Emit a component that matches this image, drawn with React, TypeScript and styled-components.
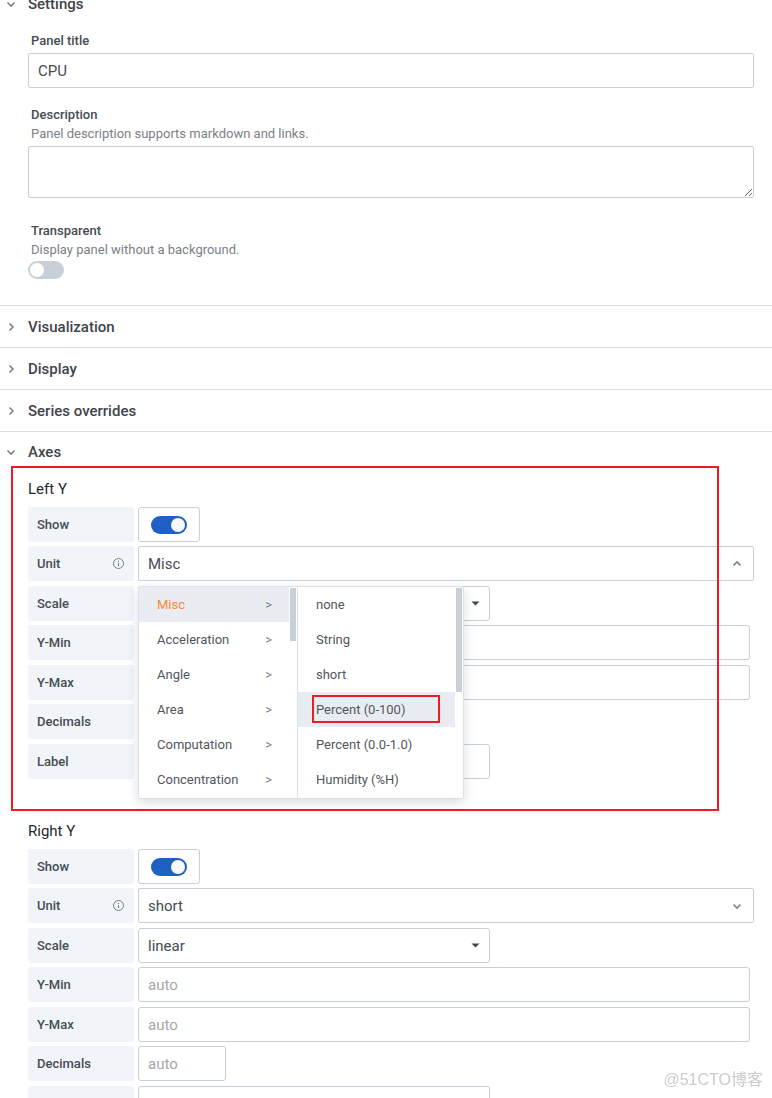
import React, { useId, useState } from 'react';
import styled, { createGlobalStyle, css } from 'styled-components';

const color = {
  text: '#464c54',
  heading: '#41444b',
  weak: '#7b8087',
  placeholder: '#a3a7ad',
  border: '#c7d0d9',
  divider: '#dce1e6',
  labelBg: '#f1f4f9',
  hover: '#e9edf2',
  blue: '#1f60c4',
  orange: '#ff8833',
  red: '#ed1c24',
};

const GlobalStyle = createGlobalStyle`
  *, *::before, *::after { box-sizing: border-box; }
  body {
    margin: 0;
    background: #fff;
    color: ${color.text};
    font-family: Roboto, 'Noto Sans CJK SC', sans-serif;
    font-size: 13px;
  }
  button, input, select, textarea { font: inherit; color: inherit; }
`;

const Pane = styled.main`
  position: relative;
  height: 100vh;
  overflow-y: auto;
  scrollbar-width: none;
`;

const Options = styled.div`
  margin-top: -16px;
`;

const Section = styled.section`
  border-bottom: 1px solid ${color.divider};
`;

const SectionHeader = styled.button<{ $open?: boolean }>`
  display: flex;
  align-items: center;
  gap: 10px;
  width: 100%;
  height: ${(p) => (p.$open ? 39 : 41)}px;
  padding: 0 4px;
  border: 0;
  background: none;
  color: ${color.heading};
  font-size: 15px;
  font-weight: 500;
  text-align: left;
  cursor: pointer;
  svg { color: ${color.weak}; }
`;

const SectionBody = styled.div<{ $top: number }>`
  padding: ${(p) => p.$top}px 18px 26px 28px;
`;

const Field = styled.div`
  display: flex;
  flex-direction: column;
  align-items: flex-start;
  & + & { margin-top: 15px; }
`;

const FieldLabel = styled.label`
  padding: 2px 3px;
  line-height: 19px;
  font-weight: 500;
  & + input[type='text'] { margin-top: 1px; }
`;

const Hint = styled.span`
  padding: 0 3px;
  margin-bottom: 3px;
  line-height: 16px;
  color: ${color.weak};
`;

const control = css`
  border: 1px solid ${color.border};
  background: #fff;
  font-size: 15px;
  outline: none;
  &::placeholder { color: ${color.placeholder}; opacity: 1; }
`;

const TextInput = styled.input.attrs({ type: 'text' })`
  ${control}
  width: 100%;
  height: 35px;
  padding: 0 9px;
  border-radius: 2px;
`;

const TextArea = styled.textarea`
  ${control}
  display: block;
  width: 100%;
  height: 52px;
  margin: 1px 0 6px;
  padding: 6px 9px;
  border-radius: 2px;
  resize: vertical;
`;

const Switch = styled.input.attrs({ type: 'checkbox', role: 'switch' })`
  appearance: none;
  width: 36px;
  height: 18px;
  margin: 0;
  padding: 2px;
  border-radius: 9px;
  background: ${color.border};
  cursor: pointer;
  &::before {
    content: '';
    display: block;
    width: 14px;
    height: 14px;
    border-radius: 50%;
    background: #fff;
  }
  &:checked { background: ${color.blue}; }
  &:checked::before { margin-left: auto; background: #f7f8fa; }
`;

const AxisGroup = styled.div`
  position: relative;
  & + & { margin-top: 42px; }
`;

const AxisTitle = styled.h6`
  margin: 0;
  height: 28px;
  line-height: 20px;
  font-size: 15px;
  font-weight: 400;
  color: #24292e;
`;

const Row = styled.div`
  display: flex;
  gap: 4px;
  height: 35px;
  margin-bottom: 5px;
  &:nth-of-type(odd) { margin-bottom: 4px; }
`;

const RowLabel = styled.label`
  display: flex;
  align-items: center;
  justify-content: space-between;
  flex: none;
  width: 106px;
  padding: 0 9px;
  border-radius: 3px;
  background: ${color.labelBg};
  font-weight: 500;
`;

const SwitchBox = styled.span`
  display: flex;
  align-items: center;
  justify-content: center;
  width: 62px;
  border: 1px solid ${color.border};
  border-radius: 3px;
`;

const AxisInput = styled.input<{ $size: 'full' | 'medium' | 'small' }>`
  ${control}
  min-width: 0;
  padding: 0 9px;
  border-radius: 3px;
  ${(p) => p.$size === 'full' && 'flex: 1; margin-right: 4px;'}
  ${(p) => p.$size === 'medium' && 'width: 352px;'}
  ${(p) => p.$size === 'small' && 'width: 88px;'}
`;

const SelectWrap = styled.div`
  display: grid;
  width: 352px;
  & > * { grid-area: 1 / 1; }
  svg {
    align-self: center;
    justify-self: end;
    margin-right: 10px;
    pointer-events: none;
  }
`;

const Select = styled.select`
  ${control}
  appearance: none;
  padding: 0 9px;
  border-radius: 3px;
`;

const Picker = styled.div`
  position: relative;
  display: grid;
  flex: 1;
  & > input, & > svg { grid-area: 1 / 1; }
  & > svg {
    align-self: center;
    justify-self: end;
    margin-right: 10px;
    color: ${color.weak};
    pointer-events: none;
  }
`;

const Cascader = styled.div`
  position: absolute;
  z-index: 2;
  top: 40px;
  left: 0;
  display: flex;
  border: 1px solid ${color.divider};
  border-radius: 2px;
  background: #fff;
  box-shadow: 0 4px 12px rgba(70, 90, 120, 0.2);
`;

const MenuColumn = styled.div<{ $thumb: number; $width: number }>`
  display: flex;
  width: ${(p) => p.$width}px;
  padding-bottom: 1px;
  & + & { border-left: 1px solid ${color.divider}; }
  &::after {
    content: '';
    width: 6px;
    height: ${(p) => p.$thumb}px;
    margin: 1px 1px 0;
    background: ${color.border};
  }
`;

const MenuItems = styled.div`
  flex: 1;
`;

const MenuItem = styled.button<{ $active?: boolean; $hover?: boolean }>`
  position: relative;
  display: flex;
  align-items: center;
  justify-content: space-between;
  width: 100%;
  height: 35px;
  padding: 0 17px 0 18px;
  border: 0;
  background: ${(p) => (p.$active || p.$hover ? color.hover : 'transparent')};
  color: ${(p) => (p.$active ? color.orange : '#52565c')};
  text-align: left;
  cursor: pointer;
`;

const Arrow = styled.span`
  color: ${color.weak};
`;

const AxisMark = styled.span`
  position: absolute;
  z-index: 3;
  inset: -13px 35px -32px -17px;
  border: 2px solid ${color.red};
  pointer-events: none;
`;

const ItemMark = styled.span`
  position: absolute;
  inset: 3px 15px 4px 14px;
  border: 2px solid ${color.red};
`;

const Watermark = styled.span`
  position: fixed;
  right: 9px;
  bottom: 7px;
  line-height: 22px;
  font-family: 'Liberation Sans', 'Noto Sans CJK SC', sans-serif;
  font-size: 16px;
  color: #cccccc;
`;

type Direction = 'up' | 'down' | 'right';
const chevrons: Record<Direction, string> = {
  up: 'M3.5 8.5 7 5l3.5 3.5',
  down: 'M3.5 5.5 7 9l3.5-3.5',
  right: 'M5.5 3.5 9 7l-3.5 3.5',
};

const Chevron = ({ to }: { to: Direction }) => (
  <svg width="14" height="14" viewBox="0 0 14 14" fill="none" stroke="currentColor" strokeWidth="1.6" aria-hidden="true">
    <path d={chevrons[to]} />
  </svg>
);

const InfoIcon = () => (
  <svg width="13" height="13" viewBox="0 0 13 13" fill="none" stroke={color.weak} aria-hidden="true">
    <circle cx="6.5" cy="6.5" r="5" />
    <path d="M6.5 6v3.2M6.5 3.7v1.2" strokeWidth="1.1" />
  </svg>
);

const Caret = () => (
  <svg width="9" height="5" viewBox="0 0 9 5" fill={color.heading} aria-hidden="true">
    <path d="M.5.5h8l-4 4z" />
  </svg>
);

const categories = ['Misc', 'Acceleration', 'Angle', 'Area', 'Computation', 'Concentration'];
const units = ['none', 'String', 'short', 'Percent (0-100)', 'Percent (0.0-1.0)', 'Humidity (%H)'];

const UnitMenu = () => (
  <Cascader>
    <MenuColumn $width={158} $thumb={53}>
      <MenuItems>
        {categories.map((name) => (
          <MenuItem type="button" key={name} $active={name === 'Misc'}>
            {name}
            <Arrow>&gt;</Arrow>
          </MenuItem>
        ))}
      </MenuItems>
    </MenuColumn>
    <MenuColumn $width={166} $thumb={104}>
      <MenuItems>
        {units.map((name) => {
          const marked = name === 'Percent (0-100)';
          return (
            <MenuItem type="button" key={name} $hover={marked}>
              {name}
              {marked && <ItemMark />}
            </MenuItem>
          );
        })}
      </MenuItems>
    </MenuColumn>
  </Cascader>
);

interface AxisProps {
  title: string;
  unit: string;
  menuOpen?: boolean;
  marked?: boolean;
}

const Axis = ({ title, unit, menuOpen, marked }: AxisProps) => {
  const id = useId();
  return (
    <AxisGroup>
      <AxisTitle>{title}</AxisTitle>
      <Row>
        <RowLabel htmlFor={`${id}show`}>Show</RowLabel>
        <SwitchBox>
          <Switch id={`${id}show`} defaultChecked />
        </SwitchBox>
      </Row>
      <Row>
        <RowLabel htmlFor={`${id}unit`}>
          Unit
          <InfoIcon />
        </RowLabel>
        <Picker>
          <TextInput id={`${id}unit`} defaultValue={unit} />
          <Chevron to={menuOpen ? 'up' : 'down'} />
          {menuOpen && <UnitMenu />}
        </Picker>
      </Row>
      <Row>
        <RowLabel htmlFor={`${id}scale`}>Scale</RowLabel>
        <SelectWrap>
          <Select id={`${id}scale`}>
            <option>linear</option>
          </Select>
          <Caret />
        </SelectWrap>
      </Row>
      <Row>
        <RowLabel htmlFor={`${id}min`}>Y-Min</RowLabel>
        <AxisInput id={`${id}min`} $size="full" placeholder="auto" />
      </Row>
      <Row>
        <RowLabel htmlFor={`${id}max`}>Y-Max</RowLabel>
        <AxisInput id={`${id}max`} $size="full" placeholder="auto" />
      </Row>
      <Row>
        <RowLabel htmlFor={`${id}decimals`}>Decimals</RowLabel>
        <AxisInput id={`${id}decimals`} $size="small" placeholder="auto" />
      </Row>
      <Row>
        <RowLabel htmlFor={`${id}label`}>Label</RowLabel>
        <AxisInput id={`${id}label`} $size="medium" />
      </Row>
      {marked && <AxisMark />}
    </AxisGroup>
  );
};

interface GroupProps {
  title: string;
  defaultOpen?: boolean;
  bodyTop?: number;
  children?: React.ReactNode;
}

const OptionsGroup = ({ title, defaultOpen = false, bodyTop = 8, children }: GroupProps) => {
  const [open, setOpen] = useState(defaultOpen);
  return (
    <Section>
      <SectionHeader type="button" $open={open} aria-expanded={open} onClick={() => setOpen(!open)}>
        <Chevron to={open ? 'down' : 'right'} />
        {title}
      </SectionHeader>
      {open && children && <SectionBody $top={bodyTop}>{children}</SectionBody>}
    </Section>
  );
};

export default function App() {
  return (
    <>
      <GlobalStyle />
      <Pane>
        <Options>
          <OptionsGroup title="Settings" defaultOpen bodyTop={6}>
            <Field>
              <FieldLabel htmlFor="title">Panel title</FieldLabel>
              <TextInput id="title" defaultValue="CPU" />
            </Field>
            <Field>
              <FieldLabel htmlFor="description">Description</FieldLabel>
              <Hint>Panel description supports markdown and links.</Hint>
              <TextArea id="description" />
            </Field>
            <Field>
              <FieldLabel htmlFor="transparent">Transparent</FieldLabel>
              <Hint>Display panel without a background.</Hint>
              <Switch id="transparent" />
            </Field>
          </OptionsGroup>
          <OptionsGroup title="Visualization" />
          <OptionsGroup title="Display" />
          <OptionsGroup title="Series overrides" />
          <OptionsGroup title="Axes" defaultOpen>
            <Axis title="Left Y" unit="Misc" menuOpen marked />
            <Axis title="Right Y" unit="short" />
          </OptionsGroup>
        </Options>
      </Pane>
      <Watermark>@51CTO博客</Watermark>
    </>
  );
}
